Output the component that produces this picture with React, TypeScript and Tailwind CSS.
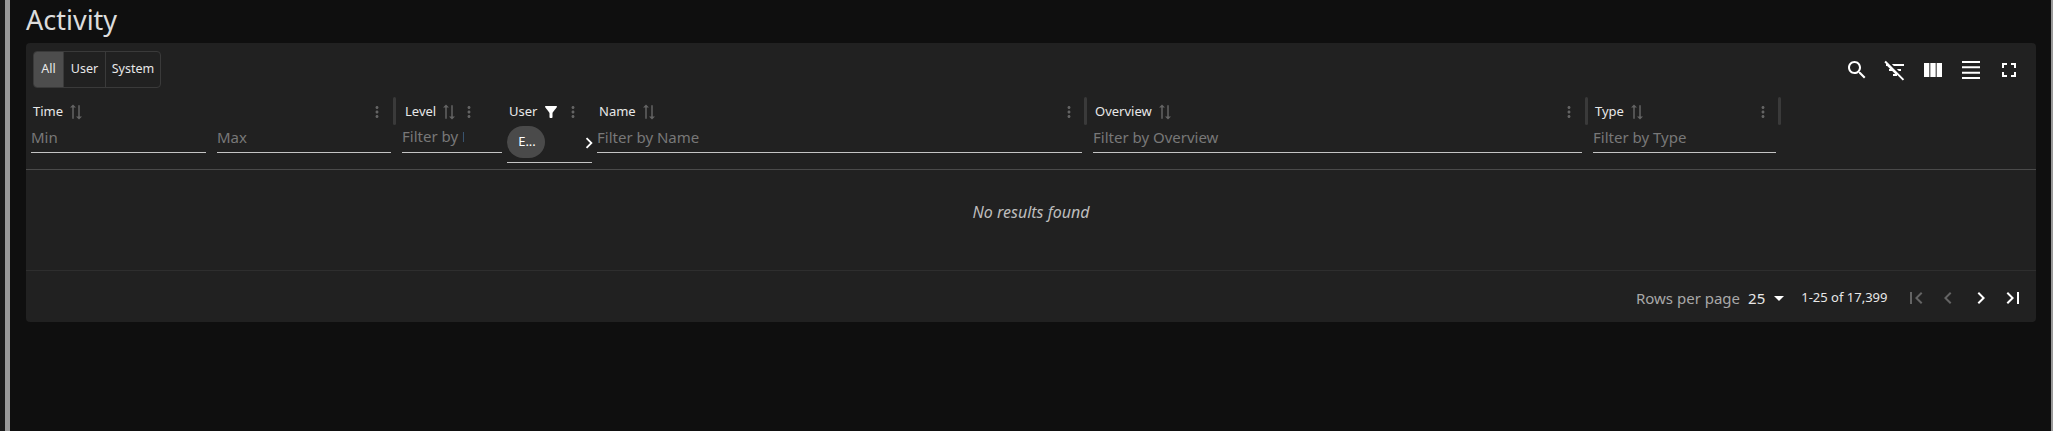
import React from "react";

const icons = {
  search: "M15.5 14h-.79l-.28-.27C15.41 12.59 16 11.11 16 9.5 16 5.91 13.09 3 9.5 3S3 5.91 3 9.5 5.91 16 9.5 16c1.61 0 3.09-.59 4.23-1.57l.27.28v.79l5 4.99L20.49 19l-4.99-5zm-6 0C7.01 14 5 11.99 5 9.5S7.01 5 9.5 5 14 7.01 14 9.5 11.99 14 9.5 14z",
  filterOff: "M10.83 8H21V6H8.83l2 2zm5 5H18v-2h-4.17l2 2zM14 16.83V18h-4v-2h2.17l-3-3H6v-2h1.17l-3-3H3V6h.17L1.39 4.22 2.8 2.81l18.38 18.38-1.41 1.41L14 16.83z",
  columns: "M14.67 5v14H9.33V5h5.34zm1 14H21V5h-5.33v14zm-7.34 0V5H3v14h5.33z",
  density: "M3 3h18v2H3zm0 16h18v2H3zm0-5.33h18v2H3zm0-5.34h18v2H3z",
  fullscreen: "M7 14H5v5h5v-2H7v-3zm-2-4h2V7h3V5H5v5zm12 7h-3v2h5v-5h-2v3zM14 5v2h3v3h2V5h-5z",
  more: "M12 8c1.1 0 2-.9 2-2s-.9-2-2-2-2 .9-2 2 .9 2 2 2zm0 2c-1.1 0-2 .9-2 2s.9 2 2 2 2-.9 2-2-.9-2-2-2zm0 6c-1.1 0-2 .9-2 2s.9 2 2 2 2-.9 2-2-.9-2-2-2z",
  sort: "M22 8l-4-4v3H3v2h15v3l4-4zM2 16l4 4v-3h15v-2H6v-3l-4 4z",
  filter: "M4.25 5.61C6.27 8.2 10 13 10 13v6c0 .55.45 1 1 1h2c.55 0 1-.45 1-1v-6s3.72-4.8 5.74-7.39c.51-.66.04-1.61-.79-1.61H5.04c-.83 0-1.3.95-.79 1.61z",
  first: "M18.41 16.59L13.82 12l4.59-4.59L17 6l-6 6 6 6zM6 6h2v12H6z",
  last: "M5.59 7.41L10.18 12l-4.59 4.59L7 18l6-6-6-6zM16 6h2v12h-2z",
  left: "M15.41 7.41L14 6l-6 6 6 6 1.41-1.41L10.83 12z",
  right: "M10 6L8.59 7.41 13.17 12l-4.58 4.59L10 18l6-6z",
  drop: "M7 10l5 5 5-5z",
};

function Icon({ d, className }: { d: string; className?: string }) {
  return (
    <svg viewBox="0 0 24 24" fill="currentColor" className={className}>
      <path d={d} />
    </svg>
  );
}

function SortIcon() {
  return <Icon d={icons.sort} className="ml-1 h-[18px] w-[18px] rotate-90 text-white/30" />;
}

function Menu({ className = "" }: { className?: string }) {
  return <Icon d={icons.more} className={`h-[18px] w-[18px] text-white/30 ${className}`} />;
}

function Grip() {
  return <div className="h-[28px] w-[3px] shrink-0 rounded-sm bg-[#3a3a3a]" />;
}

function FilterInput({ placeholder, className, clip = "" }: { placeholder: string; className: string; clip?: string }) {
  return (
    <div className={`h-[28px] border-b border-[#c4c4c4] text-[15px] leading-[24px] text-[#787878] ${className}`}>
      <div className={`overflow-hidden whitespace-nowrap ${clip}`}>{placeholder}</div>
    </div>
  );
}

function ToggleGroup() {
  return (
    <div className="flex h-[37px] rounded-[4px] border border-[#3a3a3a] text-[12.5px] text-[#e8e8e8]">
      <div className="flex w-[29px] items-center justify-center rounded-l-[3px] bg-[#4d4d4d]">All</div>
      <div className="flex w-[42px] items-center justify-center border-l border-[#3a3a3a]">User</div>
      <div className="flex w-[55px] items-center justify-center border-l border-[#3a3a3a]">System</div>
    </div>
  );
}

function HeaderRow() {
  return (
    <div className="mt-[9px] flex h-[73px] border-b border-[#4a4a4a] pl-[5px] text-[13px] text-[#e8e8e8]">
      <div className="flex w-[362px] shrink-0 flex-col">
        <div className="flex h-[28px] items-center justify-between pt-[2px] pr-[7px] pl-[2px]">
          <div className="flex items-center">Time<SortIcon /></div>
          <Menu />
        </div>
        <div className="flex gap-[11px]">
          <FilterInput placeholder="Min" className="w-[175px]" />
          <FilterInput placeholder="Max" className="w-[174px]" />
        </div>
      </div>
      <Grip />
      <div className="flex w-[111px] shrink-0 flex-col pl-[6px]">
        <div className="flex h-[28px] items-center pt-[2px] pl-[3px]">Level<SortIcon /><Menu className="ml-[2px]" /></div>
        <FilterInput placeholder="Filter by Level" className="w-[100px]" clip="-mt-[1px] w-[62px]" />
      </div>
      <div className="flex w-[90px] shrink-0 flex-col">
        <div className="flex h-[28px] items-center pt-[2px] pl-[2px]">User<Icon d={icons.filter} className="ml-[5px] h-[18px] w-[18px] text-white" /><Menu className="ml-[4px]" /></div>
        <div className="relative mt-[1px] h-[37px] w-[85px] border-b border-[#c4c4c4]">
          <div className="flex h-[32px] w-[38px] items-center justify-center rounded-full bg-[#4a4a4a] pl-[2px] text-[13px] text-white">E...</div>
          <Icon d={icons.right} className="absolute top-[6px] left-[71px] h-[22px] w-[22px] text-white" />
        </div>
      </div>
      <div className="flex w-[487px] shrink-0 flex-col">
        <div className="flex h-[28px] items-center justify-between pt-[2px] pr-[6px] pl-[2px]">
          <div className="flex items-center">Name<SortIcon /></div>
          <Menu />
        </div>
        <FilterInput placeholder="Filter by Name" className="w-[485px]" />
      </div>
      <Grip />
      <div className="flex w-[498px] shrink-0 flex-col pl-[6px]">
        <div className="flex h-[28px] items-center justify-between pt-[2px] pr-[7px] pl-[2px]">
          <div className="flex items-center">Overview<SortIcon /></div>
          <Menu />
        </div>
        <FilterInput placeholder="Filter by Overview" className="w-[489px]" />
      </div>
      <Grip />
      <div className="flex w-[190px] shrink-0 flex-col pl-[5px]">
        <div className="flex h-[28px] items-center justify-between pt-[2px] pr-[6px] pl-[2px]">
          <div className="flex items-center">Type<SortIcon /></div>
          <Menu />
        </div>
        <FilterInput placeholder="Filter by Type" className="w-[183px]" />
      </div>
      <Grip />
    </div>
  );
}

function Pagination() {
  return (
    <div className="flex h-[51px] items-center justify-end pt-[3px] pr-[11px] text-[#e8e8e8]">
      <span className="text-[15px] text-[#a8a8a8]">Rows per page</span>
      <span className="ml-[8px] text-[15px]">25</span>
      <Icon d={icons.drop} className="ml-[2px] h-[24px] w-[24px] text-white" />
      <span className="ml-[10px] text-[13px]">1-25 of 17,399</span>
      <Icon d={icons.first} className="ml-[16px] h-[24px] w-[24px] text-white/30" />
      <Icon d={icons.left} className="ml-[8.5px] h-[24px] w-[24px] text-white/30" />
      <Icon d={icons.right} className="ml-[8.5px] h-[24px] w-[24px] text-white" />
      <Icon d={icons.last} className="ml-[8.5px] h-[24px] w-[24px] text-white" />
    </div>
  );
}

export default function App() {
  return (
    <div className="flex h-[431px] w-[2053px] bg-[#0f0f0f] font-['Noto_Sans',sans-serif]">
      <div className="w-[5px] shrink-0 bg-[#1a1a1a]" />
      <div className="w-[5px] shrink-0 bg-[#999999]" />
      <div className="min-w-0 flex-1 pl-[16px]">
        <h1 className="h-[43px] text-[27px] leading-[40px] font-normal text-[#dcdcdc]">Activity</h1>
        <div className="w-[2010px] rounded-[4px] bg-[#212121]">
          <div className="flex items-center justify-between pt-[8px] pr-[15px] pl-[7px]">
            <ToggleGroup />
            <div className="flex items-center gap-[14px] text-white">
              <Icon d={icons.search} className="h-[24px] w-[24px]" />
              <Icon d={icons.filterOff} className="h-[24px] w-[24px]" />
              <Icon d={icons.columns} className="h-[24px] w-[24px]" />
              <Icon d={icons.density} className="h-[24px] w-[24px]" />
              <Icon d={icons.fullscreen} className="h-[24px] w-[24px]" />
            </div>
          </div>
          <HeaderRow />
          <div className="flex h-[101px] items-center justify-center border-b border-[#2e2e2e] pb-[16px] text-[16px] text-[#bdbdbd] italic">
            No results found
          </div>
          <Pagination />
        </div>
      </div>
      <div className="w-[2px] shrink-0 bg-[#999999]" />
    </div>
  );
}
